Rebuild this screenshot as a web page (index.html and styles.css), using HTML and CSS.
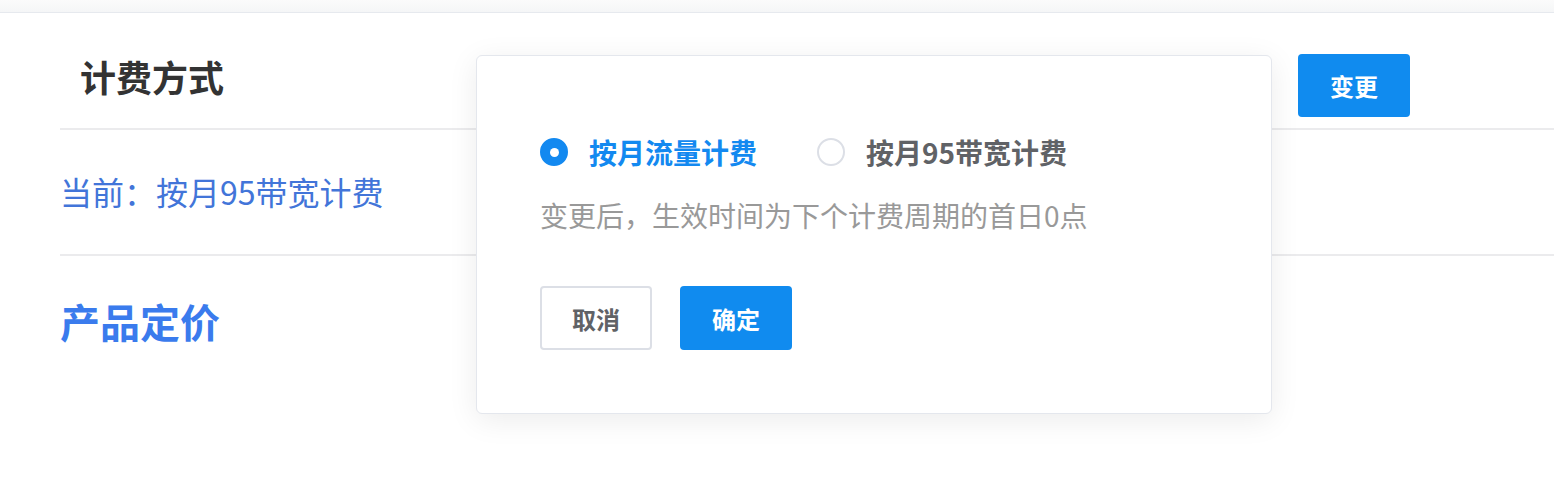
FILE: index.html
```html
<!DOCTYPE html>
<html lang="zh-CN">
<head>
<meta charset="utf-8">
<title>计费方式</title>
<link rel="stylesheet" href="styles.css">
</head>
<body>
<div class="topbar"></div>
<main class="page">
  <section class="row row-head">
    <h2 class="title">计费方式</h2>
    <button class="btn btn-primary btn-change">变更</button>
  </section>
  <section class="row row-current">
    <span class="current">当前：按月95带宽计费</span>
  </section>
  <section class="row-price">
    <h2 class="price-title">产品定价</h2>
  </section>

  <div class="popover">
    <div class="radios">
      <label class="radio checked"><span class="dot"></span><span class="radio-label">按月流量计费</span></label>
      <label class="radio"><span class="dot"></span><span class="radio-label">按月95带宽计费</span></label>
    </div>
    <p class="hint">变更后，生效时间为下个计费周期的首日0点</p>
    <div class="actions">
      <button class="btn btn-default">取消</button>
      <button class="btn btn-primary">确定</button>
    </div>
  </div>
</main>
</body>
</html>
```

FILE: styles.css
```css
* { box-sizing: border-box; }
html, body {
  margin: 0;
  padding: 0;
  background: #fff;
  font-family: "Noto Sans CJK SC", "Noto Sans", sans-serif;
}
body {
  min-height: 488px;
}
.topbar {
  height: 13px;
  background: linear-gradient(#fbfbfb, #f5f6f7);
  border-bottom: 1px solid #e6e9ee;
}
.page {
  position: relative;
  padding-left: 60px;
  min-height: 475px;
}
.row {
  display: flex;
  align-items: flex-start;
  justify-content: space-between;
  border-bottom: 2px solid #ebebed;
}
.row-head {
  height: 117px;
}
.title {
  margin: 45px 0 0 20px;
  font-size: 36px;
  line-height: 36px;
  font-weight: 700;
  color: #333;
}
.btn {
  font-family: inherit;
  font-size: 24px;
  font-weight: 700;
  width: 112px;
  height: 64px;
  border-radius: 4px;
  border: 0;
  padding: 0;
  cursor: pointer;
}
.btn-primary {
  background: #108bef;
  color: #fff;
}
.btn-default {
  background: #fff;
  color: #606266;
  border: 2px solid #dcdfe6;
}
.btn-change {
  margin: 41px 144px 0 0;
  height: 63px;
}
.row-current {
  height: 126px;
}
.current {
  margin-top: 41px;
  font-size: 32px;
  line-height: 40px;
  color: #4275d9;
}
.row-price {
  padding-top: 41px;
}
.price-title {
  margin: 0;
  font-size: 40px;
  line-height: 48px;
  font-weight: 700;
  color: #3a7bed;
}
.popover {
  position: absolute;
  left: 476px;
  top: 42px;
  width: 796px;
  height: 359px;
  background: #fff;
  border: 1px solid #e4e7ed;
  border-radius: 6px;
  box-shadow: 0 6px 30px rgba(0, 0, 0, 0.08);
  padding: 76px 63px 0;
}
.radios {
  display: flex;
  align-items: center;
  gap: 60px;
  height: 40px;
}
.radio {
  display: flex;
  align-items: center;
  gap: 21px;
  font-size: 28px;
  font-weight: 700;
  color: #606266;
}
.dot {
  width: 28px;
  height: 28px;
  border-radius: 50%;
  border: 2px solid #dcdfe6;
  background: #fff;
  display: flex;
  align-items: center;
  justify-content: center;
}
.radio.checked { color: #1389f0; }
.radio.checked .dot {
  background: #1389f0;
  border-color: #1389f0;
}
.radio.checked .dot::after {
  content: "";
  width: 9px;
  height: 9px;
  border-radius: 50%;
  background: #fff;
}
.hint {
  margin: 23px 0 0;
  font-size: 28px;
  line-height: 40px;
  color: #999;
}
.actions {
  display: flex;
  gap: 28px;
  margin-top: 51px;
}
```
